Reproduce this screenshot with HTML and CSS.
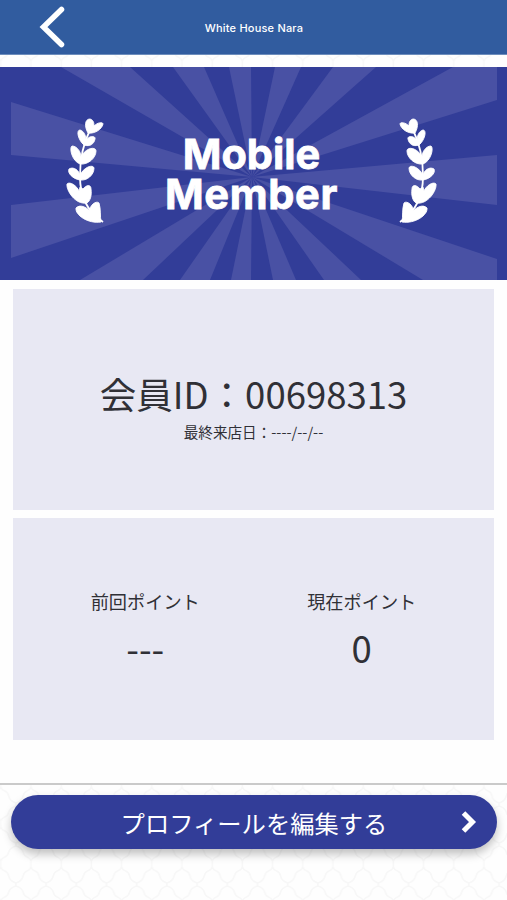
FILE: index.html
```html
<!DOCTYPE html>
<html lang="ja">
<head>
    <meta charset="UTF-8">
    <meta name="viewport" content="width=device-width, initial-scale=1.0">
    <title>White House Nara</title>
    <link rel="stylesheet" href="styles.css">
</head>
<body>
    <svg class="pattern" width="100%" height="100%">
        <defs>
            <pattern id="tile" width="30.2" height="40" patternUnits="userSpaceOnUse" x="16" y="24">
                <path d="M15 0 V3 Q14 6 11 7 Q8 8 7 12 Q6 17 0 19 V22 Q6 24 7 28 Q8 32 11 33 Q14 34 15 37 V40 V37 Q16 34 19 33 Q22 32 23 28 Q24 24 30 22 V19 Q24 17 23 12 Q22 8 19 7 Q16 6 15 3" fill="none" stroke="#f7f7f7" stroke-width="1.5"/>
            </pattern>
        </defs>
        <rect width="100%" height="100%" fill="url(#tile)"/>
    </svg>

    <header class="header">
        <a class="back" href="#" aria-label="戻る">
            <svg width="26" height="42" viewBox="0 0 26 42" fill="none">
                <path d="M22.5 3.5 L4.5 21 L22.5 38.5" stroke="#fff" stroke-width="5.5" stroke-linecap="round"/>
            </svg>
        </a>
        <h1 class="title">White House Nara</h1>
    </header>

    <main class="main">
        <section class="banner">
            <svg class="rays" viewBox="0 0 507 213" preserveAspectRatio="none">
                <g fill="#4951a4">
                    <path d="M252 110 L11 35 V88Z"/>
                    <path d="M252 110 L61 0 H130Z"/>
                    <path d="M252 110 L173 0 H204Z"/>
                    <path d="M252 110 L229 0 H251Z"/>
                    <path d="M252 110 L275 0 H301Z"/>
                    <path d="M252 110 L333 0 H376Z"/>
                    <path d="M252 110 L453 0 H497 V33Z"/>
                    <path d="M252 110 L497 88 V138Z"/>
                    <path d="M252 110 L497 192 V213 H423Z"/>
                    <path d="M252 110 L361 213 H324Z"/>
                    <path d="M252 110 L296 213 H273Z"/>
                    <path d="M252 110 L251 213 H231Z"/>
                    <path d="M252 110 L210 213 H180Z"/>
                    <path d="M252 110 L143 213 H80Z"/>
                    <path d="M252 110 L11 191 V138Z"/>
                </g>
            </svg>
            <svg class="laurel" width="38" height="106" viewBox="0 0 38 106">
                <g id="branch" fill="#fff" stroke="#fff" stroke-width="0.9" stroke-linejoin="round">
                    <path d="M24 12 C18 24 14 40 14 58 C14 78 20 92 37 104" fill="none" stroke-width="1.8"/>
                    <path d="M22 15 C18 8 19 1 24 1 C28 2 28 6 28 8 C32 4 37 4 37 6 C36 11 29 16 22 15Z"/>
                    <path d="M18 27 C12 22 10 12 14 12 C18 13 20 18 20 22 C24 17 30 18 29 21 C28 26 24 29 18 27Z"/>
                    <path d="M14 46 C6 43 3 30 6 28 C11 28 15 34 15 39 C19 30 30 28 30 33 C30 40 22 47 14 46Z"/>
                    <path d="M14 62 C7 61 1 55 3 51 C8 48 13 53 14 57 C18 49 27 46 28 50 C28 57 21 63 14 62Z"/>
                    <path d="M21 85 C9 87 0 72 1 66 C4 63 11 68 13 73 L14 69 L17 71 C20 67 25 66 25 71 C26 78 24 83 21 85Z"/>
                    <path d="M35 104 C22 106 9 97 10 90 C14 86 20 89 24 93 C23 88 30 82 33 85 C35 91 34 99 35 104Z"/>
                </g>
            </svg>
            <p class="rank">Mobile<br><span class="rank-wide">Member</span></p>
            <svg class="laurel" width="38" height="106" viewBox="0 0 38 106">
                <use href="#branch" transform="translate(38 0) scale(-1 1)"/>
            </svg>
        </section>

        <section class="card member">
            <p class="member-id">会員ID：00698313</p>
            <p class="last-visit">最終来店日：----/--/--</p>
        </section>

        <section class="card points">
            <div class="point">
                <h2 class="point-label">前回ポイント</h2>
                <p class="point-value">---</p>
            </div>
            <div class="point">
                <h2 class="point-label">現在ポイント</h2>
                <p class="point-value">0</p>
            </div>
        </section>
    </main>

    <footer class="footer">
        <a class="edit-btn" href="#">
            <span>プロフィールを編集する</span>
            <svg class="arrow" width="16" height="24" viewBox="0 0 16 24" fill="none">
                <path d="M2.5 3 L11.5 12 L2.5 21" stroke="#fff" stroke-width="5"/>
            </svg>
        </a>
    </footer>
</body>
</html>
```

FILE: styles.css
```css
* {
    box-sizing: border-box;
}
body {
    position: relative;
    margin: 0;
    height: 900px;
    display: flex;
    flex-direction: column;
    background: #fefefe;
    color: #303036;
    font-family: "Noto Sans CJK JP", sans-serif;
    overflow: hidden;
}
h1, h2, p {
    margin: 0;
    font-weight: normal;
}
.pattern {
    position: absolute;
    inset: 0;
    z-index: -1;
}
.header {
    display: grid;
    grid-template-columns: 80px 1fr 80px;
    align-items: center;
    height: 55px;
    background: #315c9f;
    border-bottom: 1px solid #6d8dbc;
    color: white;
}
.back {
    display: flex;
    padding-left: 39px;
}
.title {
    padding-top: 1px;
    padding-left: 1px;
    text-align: center;
    font-family: Inter, sans-serif;
    font-size: 11px;
    font-weight: 500;
    letter-spacing: 0.2px;
}
.main {
    height: 716px;
    margin-top: 12px;
    background: #fefefe;
}
.banner {
    position: relative;
    display: flex;
    justify-content: space-between;
    align-items: center;
    height: 213px;
    padding: 0 70px 6px 66px;
    background: #323d98;
    color: white;
}
.rays {
    position: absolute;
    inset: 0;
    width: 100%;
    height: 100%;
}
.laurel {
    position: relative;
}
.rank {
    position: relative;
    padding-top: 6px;
    font-family: Inter, sans-serif;
    font-size: 41.5px;
    font-weight: 700;
    line-height: 40px;
    text-align: center;
    -webkit-text-stroke: 0.8px white;
}
.rank-wide {
    letter-spacing: 0.7px;
}
.card {
    height: 221px;
    margin: 9px 13px 0;
    background: #e8e8f3;
}
.member {
    padding-top: 78px;
    text-align: center;
}
.member-id {
    font-size: 36.5px;
    line-height: 54px;
}
.last-visit {
    font-size: 14.6px;
    line-height: 22px;
}
.points {
    display: grid;
    grid-template-columns: 1fr 1fr;
    height: 222px;
    margin-top: 8px;
    padding: 69px 24px 0;
    text-align: center;
}
.point-label {
    font-size: 18.2px;
    line-height: 28px;
}
.point-value {
    font-size: 36.5px;
    line-height: 54px;
    margin-top: 6px;
}
.footer {
    flex: 1;
    padding: 10px 10px 0 11px;
    border-top: 2px solid #cacaca;
}
.edit-btn {
    position: relative;
    display: flex;
    align-items: center;
    justify-content: center;
    height: 54px;
    border-radius: 27px;
    background: #323d98;
    box-shadow: 0 5px 10px rgba(0, 0, 0, 0.25);
    color: white;
    font-size: 24.3px;
    text-decoration: none;
}
.arrow {
    position: absolute;
    right: 20px;
    top: 15px;
}
```
